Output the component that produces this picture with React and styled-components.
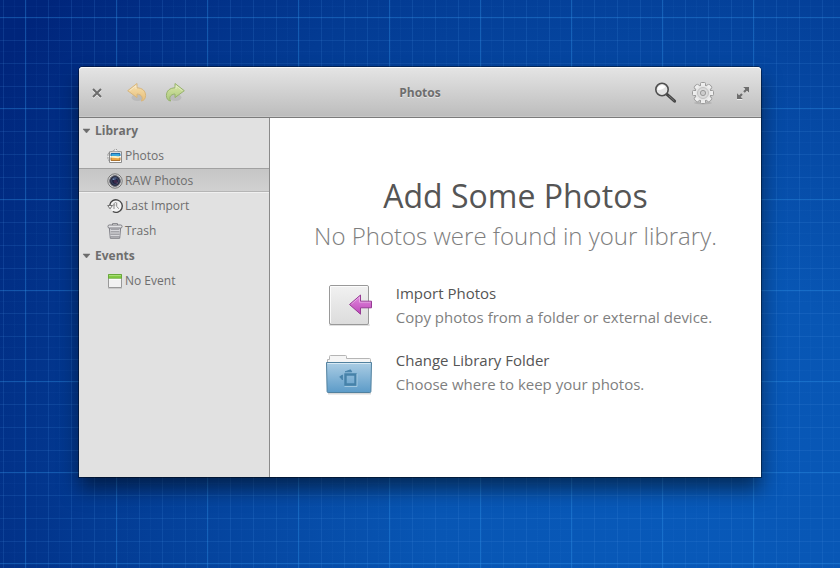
import React from "react";
import styled, { createGlobalStyle } from "styled-components";

const Global = createGlobalStyle`
  *, *::before, *::after { box-sizing: border-box; }
  body { margin: 0; font-family: "Open Sans", "Noto Sans", sans-serif; }
  button { font: inherit; color: inherit; border: 0; padding: 0; margin: 0; background: none; cursor: pointer; text-align: left; }
  h1, h2, p, ul { margin: 0; padding: 0; }
  ul { list-style: none; }
  svg { display: block; flex: none; overflow: visible; }
`;

const major = "rgba(50, 150, 235, 0.36)";
const minor = "rgba(70, 145, 225, 0.17)";
const faint = "rgba(70, 145, 225, 0.05)";
const grid = (direction) => `linear-gradient(${direction},
  ${major} 0 1px, ${faint} 1px 2px, transparent 2px 11px, ${faint} 11px 12px, transparent 12px 23px,
  ${minor} 23px 24px, transparent 24px 34px, ${faint} 34px 35px, transparent 35px 46px,
  ${minor} 46px 47px, transparent 47px 57px, ${faint} 57px 58px, transparent 58px 69px,
  ${minor} 69px 70px, transparent 70px 80px, ${faint} 80px 81px, transparent 81px)`;

const Desktop = styled.div`
  min-height: 100vh;
  display: flex;
  padding: 67px 79px 91px;
  background:
    ${grid("to right")} 25px 17px / 91px 91px,
    ${grid("to bottom")} 25px 17px / 91px 91px,
    radial-gradient(ellipse 95% 145% at 80% 90%, #0859b9 0%, #0856b4 30%, #033b93 72%, #00257b 100%);
`;

const Window = styled.main`
  flex: 1;
  display: flex;
  flex-direction: column;
  min-width: 0;
  border-radius: 4px 4px 0 0;
  background: #fff;
  box-shadow: 0 0 0 1px rgba(0, 0, 0, 0.4), 0 12px 20px rgba(0, 0, 0, 0.5);
`;

const Toolbar = styled.header`
  display: grid;
  grid-template-columns: 1fr auto 1fr;
  align-items: center;
  height: 51px;
  padding: 2px 10px 0;
  border-bottom: 1px solid #7b7b7b;
  border-radius: 4px 4px 0 0;
  background: linear-gradient(#e5e5e5, #bcbcbc);
  box-shadow: inset 0 1px #fafafa, inset 0 -1px #c8c8c8;
`;

const Tools = styled.div`
  display: flex;
  align-items: center;
  justify-content: ${(p) => (p.$end ? "flex-end" : "flex-start")};
  gap: ${(p) => (p.$wide ? "20px" : "14px")};
`;

const ToolButton = styled.button`
  display: grid;
  place-items: center;
  width: ${(p) => (p.$small ? "16px" : "24px")};
  height: 24px;
`;

const WindowTitle = styled.h1`
  font-size: 12px;
  line-height: 16px;
  font-weight: 700;
  color: #6e6e6e;
  text-shadow: 0 1px rgba(255, 255, 255, 0.5);
`;

const Body = styled.div`
  flex: 1;
  display: flex;
`;

const Sidebar = styled.nav`
  width: 191px;
  flex: none;
  border-right: 1px solid #8b8b8b;
  background: #e1e1e1;
  color: #6e6e6e;
  font-size: 12px;
`;

const GroupButton = styled.button`
  display: flex;
  align-items: center;
  gap: 5px;
  width: 100%;
  height: 25px;
  padding-left: 4px;
  font-weight: 700;
`;

const ItemButton = styled.button`
  display: flex;
  align-items: center;
  gap: 2px;
  width: 100%;
  height: 25px;
  padding-left: 28px;
  border-top: 1px solid ${(p) => (p.$selected ? "#a1a1a1" : "transparent")};
  border-bottom: 1px solid ${(p) => (p.$selected ? "#f0f0f0" : "transparent")};
  background: ${(p) => (p.$selected ? "linear-gradient(#c6c6c6, #d1d1d1)" : "none")};
  box-shadow: ${(p) => (p.$selected ? "inset 0 -1px #b5b5b5" : "none")};
`;

const Welcome = styled.section`
  flex: 1;
  display: flex;
  flex-direction: column;
  align-items: center;
  padding: 57px 16px 24px;
`;

const Heading = styled.h2`
  font-size: 32px;
  line-height: 42px;
  font-weight: 400;
  color: #555;
`;

const Subheading = styled.p`
  font-size: 24px;
  line-height: 38px;
  font-weight: 300;
  color: #7e7e7e;
`;

const Actions = styled.div`
  display: grid;
  gap: 19px;
  margin-top: 26px;
  padding-left: 6px;
`;

const ActionButton = styled.button`
  display: flex;
  align-items: center;
  gap: 23px;
  font-size: 15px;
  line-height: 24px;
`;

const ActionText = styled.span`
  display: flex;
  flex-direction: column;
`;

const ActionTitle = styled.span`
  color: #555;
`;

const ActionNote = styled.span`
  color: #7f7f7f;
`;

const CloseIcon = () => (
  <svg width="16" height="16" viewBox="0 0 16 16">
    <path d="M4 5l8 8M12 5l-8 8" stroke="#f0f0f0" strokeWidth="2" />
    <path d="M4 4l8 8M12 4l-8 8" stroke="#6c6c6c" strokeWidth="2" />
  </svg>
);

const ArrowIcon = ({ id, light, dark, line, flip }) => (
  <svg width="24" height="24" viewBox="0 0 24 24">
    <defs>
      <linearGradient id={id} x2="0" y2="1">
        <stop stopColor={light} />
        <stop offset="1" stopColor={dark} />
      </linearGradient>
    </defs>
    <ellipse cx="12.5" cy="16.5" rx="6" ry="3.5" fill="#000" opacity=".08" />
    <g transform={flip ? "translate(24 0) scale(-1 1)" : undefined}>
      <path
        d="M2.7 9.7L12 2.5V6.8C17.5 7 20.6 10 20.6 14.5C20.6 17.6 19 19.8 16.2 20C18.2 17.6 17.4 13.4 12 13V16.6Z"
        fill={`url(#${id})`} stroke={line} strokeLinejoin="round"
      />
      <path d="M4.5 9.7L11 4.7V8" fill="none" stroke="#fff" opacity=".4" />
    </g>
  </svg>
);

const SearchIcon = () => (
  <svg width="24" height="24" viewBox="0 0 24 24">
    <path d="M14 13.3L21.6 20.2" stroke="#444" strokeWidth="3" strokeLinecap="round" />
    <path d="M16 15L21 19.6" stroke="#777" strokeWidth="1" strokeLinecap="round" />
    <circle cx="9" cy="8.5" r="6.2" fill="#e4e4e4" stroke="#4f4f4f" strokeWidth="1.6" />
    <path d="M4.5 9a4.5 4.5 0 0 1 8-3.2C11 7.8 8 9.2 4.5 9z" fill="#fff" />
  </svg>
);

const teeth = [0, 45, 90, 135];

const GearIcon = () => (
  <svg width="24" height="24" viewBox="0 0 24 24">
    <ellipse cx="12" cy="22" rx="9" ry="1.5" fill="#000" opacity=".1" />
    <g fill="#eee" stroke="#9c9c9c">
      {teeth.map((angle) => (
        <rect key={angle} x="9.5" y="1.5" width="5" height="21" rx="1" transform={`rotate(${angle} 12 12)`} />
      ))}
      <circle cx="12" cy="12" r="8" />
    </g>
    {teeth.map((angle) => (
      <rect key={angle} x="10" y="2" width="4" height="20" fill="#eee" transform={`rotate(${angle} 12 12)`} />
    ))}
    <circle cx="12" cy="12" r="7.5" fill="#e6e6e6" />
    <circle cx="12" cy="12" r="5.5" fill="#dadada" stroke="#c1c1c1" />
    <circle cx="12" cy="12" r="2.6" fill="#ccc" stroke="#999" />
  </svg>
);

const ExpandIcon = () => (
  <svg width="16" height="16" viewBox="0 0 16 16">
    <g fill="#eee" transform="translate(0 1)">
      <path d="M8.2 2H14v5.8zM2 8.2V14h5.8z" />
    </g>
    <path d="M8.2 2H14v5.8zM2 8.2V14h5.8z" fill="#6e6e6e" />
    <path d="M12.5 3.5L9 7M7 9l-3.5 3.5" stroke="#6e6e6e" strokeWidth="2.2" />
  </svg>
);

const Triangle = () => (
  <svg width="7" height="5" viewBox="0 0 7 5">
    <path d="M0 1h7L3.5 5z" fill="#6b6b6b" stroke="#6b6b6b" strokeWidth=".5" />
  </svg>
);

const PhotosIcon = () => (
  <svg width="16" height="16" viewBox="0 0 16 16">
    <path d="M1 5.5l2.5-1L9 1l2.2 2.5H14V13L1 12z" fill="#f3f3f3" stroke="#8b8b8b" strokeWidth=".9" strokeDasharray="2 1" />
    <path d="M2.5 3.8h12v10.7h-12z" fill="#fff" stroke="#8b8b8b" />
    <path d="M4 5.5h9v4H4z" fill="#39a8dd" />
    <path d="M4 9h9v3.5H4z" fill="#e9a544" />
    <path d="M4 8.3c3-.8 6 .5 9-.3v2c-3 .5-6-.5-9 0z" fill="#fff1c0" />
    <path d="M4 8V5.5h9V8" fill="none" stroke="#1e6da9" />
    <path d="M4 9.5v3h9v-3" fill="none" stroke="#ad7430" />
  </svg>
);

const LensIcon = () => (
  <svg width="16" height="16" viewBox="0 0 16 16">
    <circle cx="8" cy="8" r="7.2" fill="#dedede" stroke="#777" />
    <circle cx="8" cy="8" r="5.4" fill="#242a40" stroke="#6b6b73" />
    <circle cx="8" cy="8" r="3.5" fill="#202441" stroke="#3c4664" />
    <path d="M5 6.5a3.6 3.6 0 0 1 5-1.8L8 7.5z" fill="#46577c" />
    <circle cx="8.5" cy="8.5" r="1.7" fill="#3f2a4c" />
    <circle cx="6.5" cy="6.3" r=".8" fill="#8093ba" />
    <circle cx="10.2" cy="10" r=".7" fill="#75506b" />
  </svg>
);

const ClockIcon = () => (
  <svg width="16" height="16" viewBox="0 0 16 16">
    <circle cx="9" cy="8" r="6" fill="#f4f4f4" />
    <path d="M2.8 7a6.3 6.3 0 1 1 3 6.5" fill="none" stroke="#484848" strokeWidth="1.4" />
    <path d="M.7 7.5h4.8L3 10.8z" fill="#f5f5f5" stroke="#555" strokeWidth=".8" />
    <path d="M7 11V6.5c0-1.3.7-2 1.8-2M5.8 7h2.5M9.7 4.5v4l2.2 2.2" fill="none" stroke="#8b8b8b" />
  </svg>
);

const TrashIcon = () => (
  <svg width="16" height="16" viewBox="0 0 16 16">
    <path d="M2.3 4.5h11.4l-1 10.8H3.3z" fill="#cacace" stroke="#818188" />
    <path d="M5 6v8.5M7 6v8.5M9 6v8.5M11 6v8.5" stroke="#7c7c82" />
    <path d="M3.5 7.5h9M3.5 10h9M3.5 12.5h9" stroke="#eeeef0" strokeWidth=".7" />
    <rect x="1" y="2" width="14" height="3" rx="1.3" fill="#e4e4e6" stroke="#7c7c82" />
    <path d="M5.5 2V.7h5V2" fill="#c5c5c5" stroke="#7c7c82" />
  </svg>
);

const EventIcon = () => (
  <svg width="16" height="16" viewBox="0 0 16 16">
    <path d="M1.5 1.5h13v13h-13z" fill="#f1f1f1" stroke="#999" />
    <path d="M1.5 1.5h13v3.8h-13z" fill="#82cb43" stroke="#68a93a" />
    <path d="M2 2.5h12" stroke="#a9de76" />
    <path d="M2 6.3h12" stroke="#fff" />
    <path d="M1 15.5h14" stroke="#000" opacity=".1" />
  </svg>
);

const ImportIcon = () => (
  <svg width="48" height="48" viewBox="0 0 48 48">
    <defs>
      <linearGradient id="paper" x2="0" y2="1">
        <stop stopColor="#f1f1f1" />
        <stop offset="1" stopColor="#dcdcdc" />
      </linearGradient>
      <linearGradient id="magenta" x2="0" y2="1">
        <stop stopColor="#e28ade" />
        <stop offset="1" stopColor="#bd48b9" />
      </linearGradient>
    </defs>
    <rect x="4" y="43" width="41" height="2" rx="1" fill="#000" opacity=".12" />
    <rect x="4.5" y="4.5" width="39" height="39" rx="1.5" fill="url(#paper)" stroke="#999" />
    <path d="M5.5 42V5.5h37" fill="none" stroke="#fff" opacity=".8" />
    <path d="M24.5 23.5L35.5 14v6.2h11v6.6h-11v6.4z" fill="url(#magenta)" stroke="#963b94" />
    <path d="M26.5 23l8-7v5.2h11" fill="none" stroke="#fff" opacity=".35" />
  </svg>
);

const FolderIcon = () => (
  <svg width="48" height="48" viewBox="0 0 48 48">
    <defs>
      <linearGradient id="folder" x2="0" y2="1">
        <stop stopColor="#abcde4" />
        <stop offset="1" stopColor="#5c9bc8" />
      </linearGradient>
    </defs>
    <path d="M3 45h43v1.5H3z" fill="#000" opacity=".15" />
    <path d="M2.5 38V11.5h2v-3q0-1 1-1h15q1 0 1 1v2h23q1 0 1 1V38z" fill="#f5f5f5" stroke="#b5b5b5" />
    <path d="M1.5 14.5h45l-.6 29q0 1-1 1H3.1q-1 0-1-1z" fill="url(#folder)" stroke="#51819f" />
    <path d="M2.5 15.5h43" stroke="#d7e9f4" />
    <path d="M20.5 26.5h10v10h-10z" fill="none" stroke="#4682a9" strokeWidth="2.4" />
    <path d="M20 23.8l5.5-2 1.3 2zM17.5 32v-5l-2.8 1.8z" fill="#4682a9" stroke="#4682a9" strokeWidth=".8" />
    <path d="M19.5 38.5h12.5V26" fill="none" stroke="#aed1e6" strokeWidth=".8" />
  </svg>
);

const groups = [
  {
    name: "Library",
    items: [
      { name: "Photos", Icon: PhotosIcon },
      { name: "RAW Photos", Icon: LensIcon, selected: true },
      { name: "Last Import", Icon: ClockIcon },
      { name: "Trash", Icon: TrashIcon },
    ],
  },
  { name: "Events", items: [{ name: "No Event", Icon: EventIcon }] },
];

const actions = [
  { name: "Import Photos", note: "Copy photos from a folder or external device.", Icon: ImportIcon },
  { name: "Change Library Folder", note: "Choose where to keep your photos.", Icon: FolderIcon },
];

export default function App() {
  return (
    <>
      <Global />
      <Desktop>
        <Window>
          <Toolbar>
            <Tools $wide>
              <ToolButton $small aria-label="Close"><CloseIcon /></ToolButton>
              <Tools>
                <ToolButton aria-label="Undo">
                  <ArrowIcon id="undo" light="#f7e3b2" dark="#e7bd78" line="#d8b67c" />
                </ToolButton>
                <ToolButton aria-label="Redo">
                  <ArrowIcon id="redo" light="#dce8a9" dark="#a9c77b" line="#97b26d" flip />
                </ToolButton>
              </Tools>
            </Tools>
            <WindowTitle>Photos</WindowTitle>
            <Tools $end $wide>
              <Tools>
                <ToolButton aria-label="Search"><SearchIcon /></ToolButton>
                <ToolButton aria-label="Settings"><GearIcon /></ToolButton>
              </Tools>
              <ToolButton $small aria-label="Maximize"><ExpandIcon /></ToolButton>
            </Tools>
          </Toolbar>
          <Body>
            <Sidebar aria-label="Library">
              {groups.map((group) => (
                <section key={group.name}>
                  <GroupButton aria-expanded="true"><Triangle />{group.name}</GroupButton>
                  <ul>
                    {group.items.map(({ name, Icon, selected }) => (
                      <li key={name}>
                        <ItemButton $selected={selected} aria-current={selected ? "page" : undefined}>
                          <Icon />{name}
                        </ItemButton>
                      </li>
                    ))}
                  </ul>
                </section>
              ))}
            </Sidebar>
            <Welcome>
              <Heading>Add Some Photos</Heading>
              <Subheading>No Photos were found in your library.</Subheading>
              <Actions>
                {actions.map(({ name, note, Icon }) => (
                  <ActionButton key={name}>
                    <Icon />
                    <ActionText>
                      <ActionTitle>{name}</ActionTitle>
                      <ActionNote>{note}</ActionNote>
                    </ActionText>
                  </ActionButton>
                ))}
              </Actions>
            </Welcome>
          </Body>
        </Window>
      </Desktop>
    </>
  );
}
